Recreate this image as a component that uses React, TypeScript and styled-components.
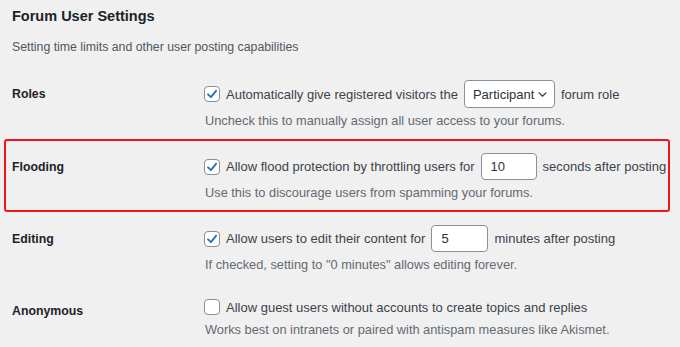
import React from 'react';
import styled, {createGlobalStyle} from 'styled-components';

const GlobalStyle = createGlobalStyle`
    html, body {
        margin: 0;
        padding: 0;
        background: #f0f0f1;
    }
    body {
        font-family: "Liberation Sans", Arial, sans-serif;
        color: #3c434a;
    }
`

type RowType = {
    label: string
    checked: boolean
    before: string
    after?: string
    field?: 'select' | 'number'
    value?: string
    fieldWidth?: number
    help: string
    highlight?: boolean
}

const rows: RowType[] = [
    {
        label: 'Roles',
        checked: true,
        before: 'Automatically give registered visitors the',
        field: 'select',
        value: 'Participant',
        after: 'forum role',
        help: 'Uncheck this to manually assign all user access to your forums.',
    },
    {
        label: 'Flooding',
        checked: true,
        before: 'Allow flood protection by throttling users for',
        field: 'number',
        value: '10',
        fieldWidth: 56,
        after: 'seconds after posting',
        help: 'Use this to discourage users from spamming your forums.',
        highlight: true,
    },
    {
        label: 'Editing',
        checked: true,
        before: 'Allow users to edit their content for',
        field: 'number',
        value: '5',
        fieldWidth: 57,
        after: 'minutes after posting',
        help: 'If checked, setting to "0 minutes" allows editing forever.',
    },
    {
        label: 'Anonymous',
        checked: false,
        before: 'Allow guest users without accounts to create topics and replies',
        help: 'Works best on intranets or paired with antispam measures like Akismet.',
    },
]

const CheckIcon = () => (
    <svg width="12" height="12" viewBox="0 0 12 12">
        <path d="M2 6.3 L4.9 9.1 L10.2 2.6" fill="none" stroke="#2271b1" strokeWidth="1.8"
              strokeLinecap="round" strokeLinejoin="round"/>
    </svg>
)

const Chevron = () => (
    <svg width="9" height="5" viewBox="0 0 9 5">
        <path d="M1 0.8 L4.5 4.2 L8 0.8" fill="none" stroke="#3c434a" strokeWidth="1.2"
              strokeLinecap="round" strokeLinejoin="round"/>
    </svg>
)

export default function App() {
    return (
        <Page>
            <GlobalStyle/>
            <Title>Forum User Settings</Title>
            <Description>Setting time limits and other user posting capabilities</Description>
            <Table>
                {rows.map(r => (
                    <Row key={r.label} highlight={!!r.highlight}>
                        <Label>{r.label}</Label>
                        <Cell>
                            <Line>
                                <Checkbox>{r.checked && <CheckIcon/>}</Checkbox>
                                <span>{r.before}</span>
                                {r.field === 'select' && (
                                    <Select>
                                        <span>{r.value}</span>
                                        <Chevron/>
                                    </Select>
                                )}
                                {r.field === 'number' && (
                                    <NumberInput width={r.fieldWidth || 56}>{r.value}</NumberInput>
                                )}
                                {r.after && <span>{r.after}</span>}
                            </Line>
                            <Help>{r.help}</Help>
                        </Cell>
                    </Row>
                ))}
            </Table>
        </Page>
    )
}

const Page = styled.div`
    width: 680px;
    height: 347px;
    overflow: hidden;
    background: #f0f0f1;
`

const Title = styled.h2`
    margin: 0;
    padding: 6px 0 0 12px;
    font-size: 14.5px;
    font-weight: 700;
    line-height: 20px;
    color: #1d2327;
`

const Description = styled.p`
    margin: 0;
    padding: 12px 0 0 12px;
    font-size: 12.3px;
    line-height: 18px;
    color: #50575e;
`

const Table = styled.div`
    display: flex;
    flex-direction: column;
    padding-top: 11px;
`

const Row = styled.div<{highlight: boolean}>`
    position: relative;
    display: grid;
    grid-template-columns: 193px 1fr;
    padding: 13px 0 10px 12px;

    &::after {
        content: '';
        display: ${p => p.highlight ? 'block' : 'none'};
        position: absolute;
        top: -1px;
        bottom: 0;
        left: 4px;
        right: 10px;
        border: 2px solid #f5141a;
        border-radius: 3px;
        pointer-events: none;
    }
`

const Label = styled.div`
    font-size: 12.3px;
    font-weight: 700;
    color: #1d2327;
    line-height: 28px;
`

const Cell = styled.div`
    display: flex;
    flex-direction: column;
`

const Line = styled.div`
    display: flex;
    align-items: center;
    gap: 6px;
    min-height: 20px;
    font-size: 13px;
    color: #3c434a;
    white-space: nowrap;
`

const Checkbox = styled.span`
    width: 16px;
    height: 16px;
    box-sizing: border-box;
    display: flex;
    align-items: center;
    justify-content: center;
    border: 1px solid #8c8f94;
    border-radius: 4px;
    background: #fff;
    margin-left: -1px;
`

const Select = styled.span`
    box-sizing: border-box;
    height: 28px;
    width: 91px;
    display: flex;
    align-items: center;
    justify-content: space-between;
    padding: 0 7px 0 8px;
    border: 1px solid #8c8f94;
    border-radius: 4px;
    background: #fff;
    color: #2c3338;
`

const NumberInput = styled.span<{width: number}>`
    box-sizing: border-box;
    height: 27px;
    width: ${p => p.width}px;
    display: flex;
    align-items: center;
    padding: 0 9px;
    border: 1px solid #8c8f94;
    border-radius: 4px;
    background: #fff;
    color: #2c3338;
`

const Help = styled.div`
    margin-top: 4px;
    font-size: 12.8px;
    line-height: 18px;
    color: #646970;
`
